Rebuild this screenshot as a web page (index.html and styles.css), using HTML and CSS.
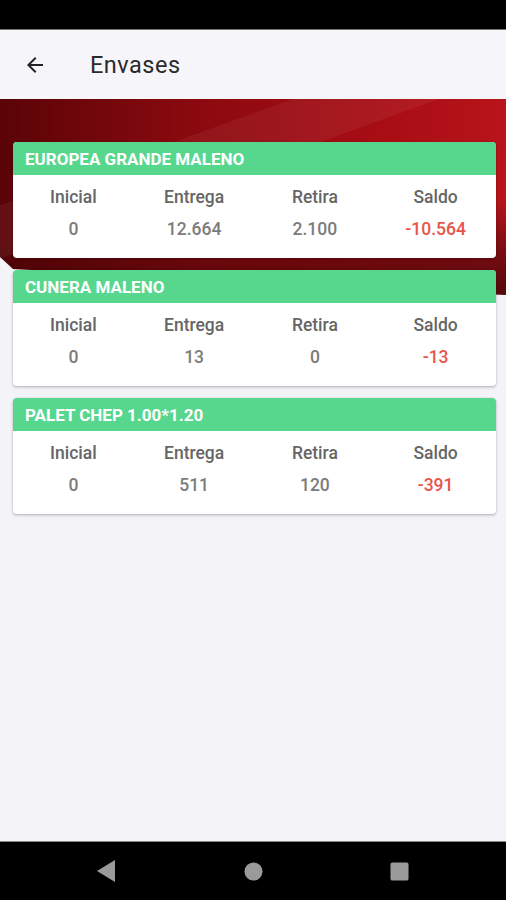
FILE: index.html
```html
<!DOCTYPE html>
<html lang="es">

<head>
    <meta charset="UTF-8">
    <meta name="viewport" content="width=device-width, initial-scale=1.0">
    <title>Envases</title>
    <link rel="stylesheet" href="styles.css">
</head>

<body>
    <div class="status-bar"></div>

    <header class="app-bar">
        <svg class="back-icon" width="24" height="24" viewBox="0 0 24 24">
            <path d="M20 11H7.83l5.59-5.59L12 4l-8 8 8 8 1.41-1.41L7.83 13H20v-2z" fill="#222"/>
        </svg>
        <h1 class="title">Envases</h1>
    </header>

    <main class="content">
        <div class="banner"></div>

        <div class="card-list">
            <div class="card">
                <div class="card-header">EUROPEA GRANDE MALENO</div>
                <div class="card-body">
                    <div class="col"><span class="label">Inicial</span><span class="value">0</span></div>
                    <div class="col"><span class="label">Entrega</span><span class="value">12.664</span></div>
                    <div class="col"><span class="label">Retira</span><span class="value">2.100</span></div>
                    <div class="col"><span class="label">Saldo</span><span class="value negative">-10.564</span></div>
                </div>
            </div>

            <div class="card">
                <div class="card-header">CUNERA MALENO</div>
                <div class="card-body">
                    <div class="col"><span class="label">Inicial</span><span class="value">0</span></div>
                    <div class="col"><span class="label">Entrega</span><span class="value">13</span></div>
                    <div class="col"><span class="label">Retira</span><span class="value">0</span></div>
                    <div class="col"><span class="label">Saldo</span><span class="value negative">-13</span></div>
                </div>
            </div>

            <div class="card">
                <div class="card-header">PALET CHEP 1.00*1.20</div>
                <div class="card-body">
                    <div class="col"><span class="label">Inicial</span><span class="value">0</span></div>
                    <div class="col"><span class="label">Entrega</span><span class="value">511</span></div>
                    <div class="col"><span class="label">Retira</span><span class="value">120</span></div>
                    <div class="col"><span class="label">Saldo</span><span class="value negative">-391</span></div>
                </div>
            </div>
        </div>
    </main>

    <nav class="nav-bar">
        <svg width="19" height="22" viewBox="0 0 19 22"><polygon points="18,0 18,22 0,11" fill="#9a9a9a"/></svg>
        <svg width="19" height="19" viewBox="0 0 20 20"><circle cx="10" cy="10" r="9.5" fill="#9a9a9a"/></svg>
        <svg width="19" height="19" viewBox="0 0 20 20"><rect x="0.5" y="0.5" width="19" height="19" rx="2" fill="#9a9a9a"/></svg>
    </nav>
</body>

</html>
```

FILE: styles.css
```css
* {
    box-sizing: border-box;
}

body {
    margin: 0;
    width: 506px;
    height: 900px;
    display: flex;
    flex-direction: column;
    font-family: Roboto, "Liberation Sans", sans-serif;
    background-color: #f4f3f8;
    overflow: hidden;
}

.status-bar {
    height: 30px;
    background-color: #000;
    border-bottom: 1px solid #777;
}

.app-bar {
    height: 69px;
    display: flex;
    align-items: center;
    padding-left: 23px;
    background-color: #f6f5f9;
}

.back-icon {
    margin-right: 43px;
}

.title {
    margin: 0;
    font-size: 23.5px;
    font-weight: 400;
    color: #2a2a2a;
    letter-spacing: 0.5px;
}

.content {
    flex: 1;
    position: relative;
}

.banner {
    position: absolute;
    left: 0;
    top: 0;
    width: 100%;
    height: 196px;
    background:
        linear-gradient(160deg, transparent 0 28%, rgba(255, 255, 255, 0.05) 28% 42%, transparent 42%),
        linear-gradient(175deg, transparent 0 60%, rgba(0, 0, 0, 0.35) 82%, rgba(0, 0, 0, 0.55) 100%),
        linear-gradient(90deg, #5a0407 0%, #8c0a0f 40%, #a80d14 75%, #b8141b 100%);
    clip-path: polygon(0 0, 100% 0, 100% 196px, 13px 170px, 0 158px);
}

.card-list {
    position: relative;
    display: flex;
    flex-direction: column;
    gap: 12px;
    padding: 43px 10px 0 13px;
}

.card {
    background-color: #fff;
    border-radius: 4px;
    overflow: hidden;
    box-shadow: 0 1px 3px rgba(0, 0, 0, 0.3);
}

.card-header {
    height: 33px;
    display: flex;
    align-items: center;
    padding-left: 12px;
    background-color: #57d68d;
    color: #fff;
    font-size: 17px;
    font-weight: 700;
}

.card-body {
    display: grid;
    grid-template-columns: repeat(4, 1fr);
    height: 83px;
    padding-top: 12px;
}

.col {
    display: flex;
    flex-direction: column;
    align-items: center;
    gap: 12px;
}

.label {
    font-size: 17.5px;
    font-weight: 500;
    color: #666;
    line-height: 20px;
}

.value {
    font-size: 17.5px;
    font-weight: 500;
    color: #7c7c7c;
    line-height: 20px;
}

.negative {
    color: #e9544b;
}

.nav-bar {
    height: 59px;
    display: flex;
    align-items: center;
    justify-content: space-between;
    padding: 0 97px 0 97px;
    background-color: #000;
    border-top: 1px solid #888;
}
```
